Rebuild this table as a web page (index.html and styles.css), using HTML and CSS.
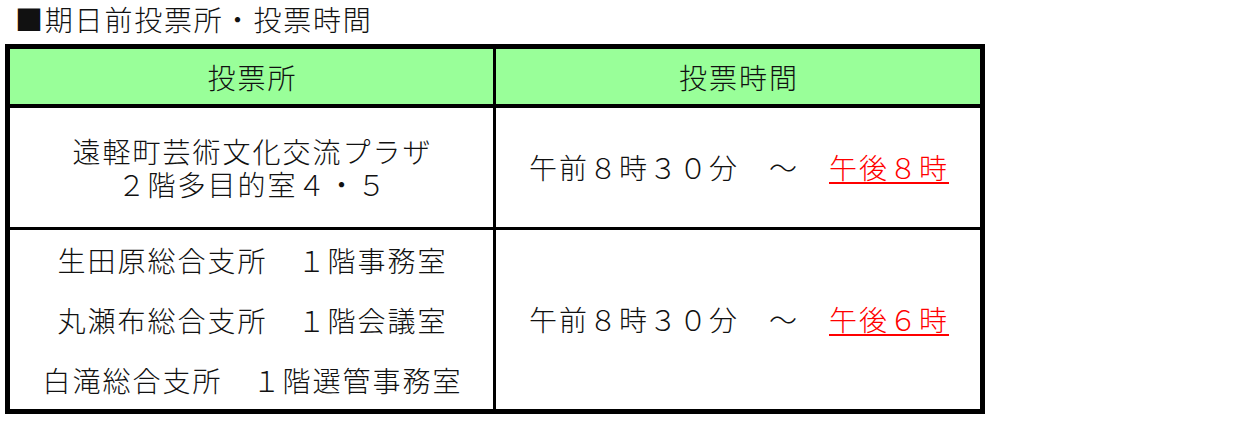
FILE: index.html
```html
<!DOCTYPE html>
<html lang="ja">
<head>
<meta charset="utf-8">
<link rel="stylesheet" href="styles.css">
</head>
<body>
<h2 class="title">■期日前投票所・投票時間</h2>
<div class="table">
  <div class="cell head">投票所</div>
  <div class="cell head">投票時間</div>
  <div class="cell body two">
    <div class="line">遠軽町芸術文化交流プラザ</div>
    <div class="line">２階多目的室４・５</div>
  </div>
  <div class="cell body">
    <div class="line">午前８時３０分　～　<span class="red">午後８時</span></div>
  </div>
  <div class="cell body three">
    <div class="line">生田原総合支所　１階事務室</div>
    <div class="line">丸瀬布総合支所　１階会議室</div>
    <div class="line">白滝総合支所　１階選管事務室</div>
  </div>
  <div class="cell body">
    <div class="line">午前８時３０分　～　<span class="red">午後６時</span></div>
  </div>
</div>
</body>
</html>
```
FILE: styles.css
```css
html, body {
  margin: 0;
  padding: 0;
  background: #fff;
}
body {
  font-family: "Noto Sans CJK JP", "Noto Sans", sans-serif;
  font-weight: 300;
  color: #111;
  width: 1249px;
  height: 421px;
  overflow: hidden;
}
.title {
  margin: 0;
  padding: 3px 0 0 15px;
  height: 44px;
  box-sizing: border-box;
  font-size: 28px;
  line-height: 32px;
  font-weight: 300;
  letter-spacing: 1.8px;
}
.table {
  margin-left: 5px;
  width: 980px;
  box-sizing: border-box;
  border: 5px solid #000;
  background: #000;
  display: grid;
  grid-template-columns: 483px 484px;
  grid-template-rows: 56px 119px 179px;
  column-gap: 3px;
  row-gap: 3px;
}
.cell {
  background: #fff;
  display: flex;
  flex-direction: column;
  justify-content: center;
  align-items: center;
  font-size: 28px;
  letter-spacing: 2px;
  padding-left: 2px;
}
.head {
  background: #99ff99;
  line-height: 30px;
  margin-bottom: 1px;
}
.body .line {
  line-height: 33px;
}
.three .line {
  line-height: 60px;
}
.red {
  color: #ff0000;
  text-decoration: underline;
  text-decoration-thickness: 2px;
  text-underline-offset: 3px;
}
```
